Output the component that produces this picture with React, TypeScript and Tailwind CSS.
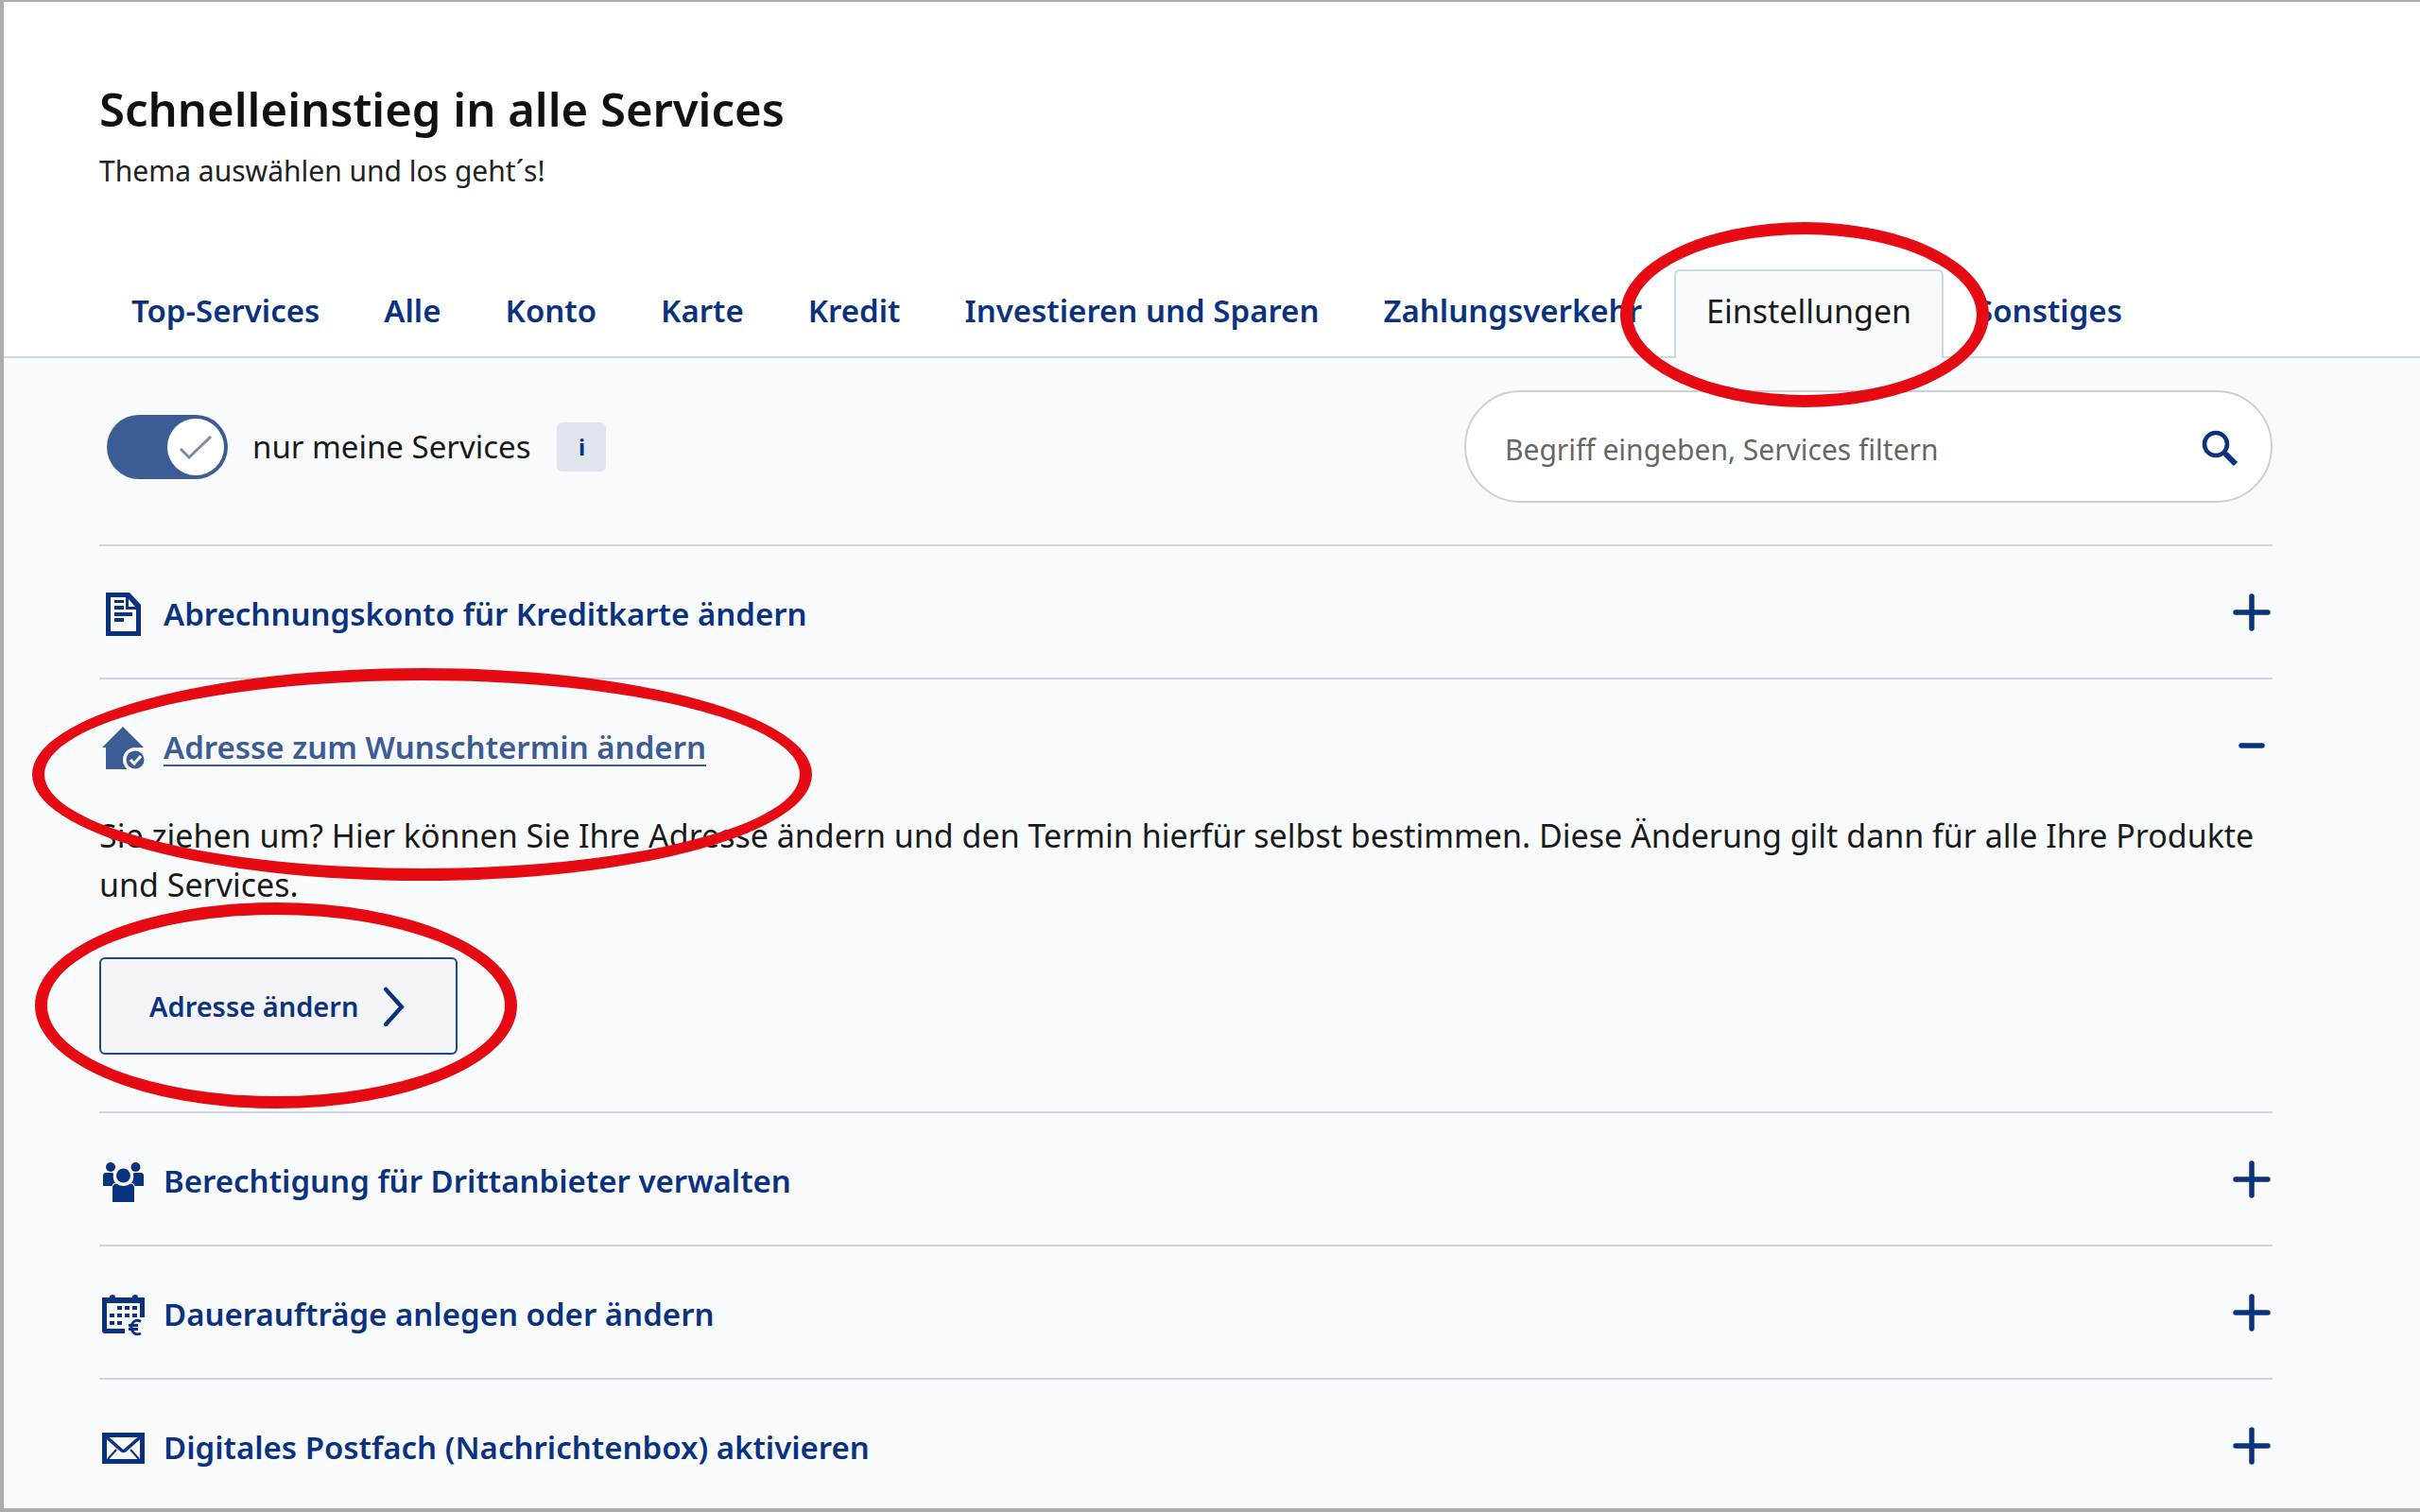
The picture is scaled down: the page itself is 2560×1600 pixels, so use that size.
import { useState } from "react";
import type { ReactNode } from "react";

const tabs = [
  "Top-Services",
  "Alle",
  "Konto",
  "Karte",
  "Kredit",
  "Investieren und Sparen",
  "Zahlungsverkehr",
  "Einstellungen",
  "Sonstiges",
];

const DocumentIcon = () => (
  <svg viewBox="0 0 48 48" className="size-12 shrink-0" fill="currentColor" aria-hidden="true">
    <path
      fillRule="evenodd"
      d="M7 1H32L44 14V47H7ZM12 6V42H39V19H28V6ZM31 8V16H38Z"
    />
    <path d="M16 9h10v3H16zM16 15h10v4H16zM16 22h19v4H16zM16 28h10v4H16z" />
  </svg>
);

const HouseIcon = () => (
  <svg viewBox="0 0 48 48" className="size-12 shrink-0" fill="currentColor" aria-hidden="true">
    <path d="M25 2L47 24H41V47H7V24H3Z" />
    <circle cx="38" cy="37" r="13" className="fill-[#f9fafc]" />
    <circle cx="38" cy="37" r="9.5" />
    <path d="M33 37l4 4 7-8" fill="none" className="stroke-white" strokeWidth="3" />
  </svg>
);

const PeopleIcon = () => (
  <svg viewBox="0 0 48 48" className="size-12 shrink-0" fill="currentColor" aria-hidden="true">
    <circle cx="12" cy="9" r="5" />
    <circle cx="38.5" cy="9" r="5" />
    <circle cx="25.5" cy="18" r="7.5" />
    <path d="M4 18q0-3 3-3h6q2 0 2 1-1 6 2 10-3 0-3.5 3H4zM47 18q0-3-3-3h-6q-2 0-2 1 1 6-2 10 3 0 3.5 3H47z" />
    <path d="M14 31q0-4 4-4.5 7.5 5 15 0 4 .5 4 4.5v15H14z" />
  </svg>
);

const CalendarIcon = () => (
  <svg viewBox="0 0 48 48" className="size-12 shrink-0" fill="currentColor" aria-hidden="true">
    <path d="M3 6h8a3 3 0 0 1 6 0h18a3 3 0 0 1 6 0h7v21h-5V12H8v27h19v5H6q-3 0-3-3z" />
    <path d="M19 15h5v4h-5zM27 15h5v4h-5zM35 15h5v4h-5zM11 23h5v4h-5zM19 23h5v4h-5zM27 23h5v4h-5zM35 23h5v4h-5zM11 31h5v4h-5zM19 31h5v4h-5z" />
    <path
      d="M44 31.5C38 28 34 33 34 37.5S38 47 44 44M31 35.5h10M31 39.5h10"
      fill="none"
      stroke="currentColor"
      strokeWidth="2.8"
    />
  </svg>
);

const MailIcon = () => (
  <svg viewBox="0 0 48 48" className="size-12 shrink-0" fill="none" stroke="currentColor" aria-hidden="true">
    <path d="M5.5 10.5h40v28h-40z" strokeWidth="5" />
    <path d="M8 13l16 14q1.5 1 3 0l16-14" strokeWidth="3.5" />
    <path d="M9 36l9-10M42 36l-9-10" strokeWidth="2" />
  </svg>
);

const PlusMinus = ({ open }: { open: boolean }) => (
  <svg viewBox="0 0 40 40" className="size-10" fill="none" stroke="currentColor" strokeWidth="5.5" strokeLinecap="round" aria-hidden="true">
    {open ? <path d="M9 20h22" /> : <path d="M3 20h34M20 3v34" />}
  </svg>
);

interface IService {
  title: string;
  icon: ReactNode;
  text?: string;
  action?: string;
}

const services: IService[] = [
  { title: "Abrechnungskonto für Kreditkarte ändern", icon: <DocumentIcon /> },
  {
    title: "Adresse zum Wunschtermin ändern",
    icon: <HouseIcon />,
    text: "Sie ziehen um? Hier können Sie Ihre Adresse ändern und den Termin hierfür selbst bestimmen. Diese Änderung gilt dann für alle Ihre Produkte und Services.",
    action: "Adresse ändern",
  },
  { title: "Berechtigung für Drittanbieter verwalten", icon: <PeopleIcon /> },
  { title: "Daueraufträge anlegen oder ändern", icon: <CalendarIcon /> },
  { title: "Digitales Postfach (Nachrichtenbox) aktivieren", icon: <MailIcon /> },
];

// red marker drawn over the content it surrounds
const Marker = ({ className }: { className: string }) => (
  <span
    aria-hidden="true"
    className={`pointer-events-none absolute z-10 rounded-[50%] border-[13px] border-[#e60b13] ${className}`}
  />
);

const ServiceRow = ({ service, open, onToggle }: { service: IService; open: boolean; onToggle: () => void }) => (
  <li className="group relative border-t-2 border-[#cfd5e0]">
    <button
      type="button"
      aria-expanded={open}
      onClick={onToggle}
      className="flex w-full items-center justify-between py-[45px] pr-[2px] text-left group-last:pb-10"
    >
      <span className={`flex h-[49px] items-center gap-5 pt-1 ${open ? "text-[#3b5c94]" : ""}`}>
        {service.icon}
        <span
          className={`text-[33px] leading-[49px] font-semibold ${
            open ? "underline decoration-2 underline-offset-[6px]" : ""
          }`}
        >
          {service.title}
        </span>
      </span>
      <PlusMinus open={open} />
    </button>
    {open && service.text && (
      <>
        <Marker className="-top-3 -left-[71px] h-[225px] w-[825px]" />
        <div className="pb-[60px]">
          <p className="text-[34px] leading-[52px] text-[#1a1a1a]">{service.text}</p>
          <div className="relative mt-[51px] inline-block align-top">
            <button
              type="button"
              className="flex items-center gap-6 rounded-md border-2 border-[#1f4a87] bg-[#f2f4f8] px-[51px] py-7 text-[29px] leading-[43px] font-semibold"
            >
              {service.action}
              <svg viewBox="0 0 28 44" className="h-[43px] w-7" fill="none" stroke="currentColor" strokeWidth="4.5" strokeLinecap="round" aria-hidden="true">
                <path d="M5 4l17 19L5 42" />
              </svg>
            </button>
            <Marker className="-top-[58px] -left-[68px] h-[218px] w-[510px]" />
          </div>
        </div>
      </>
    )}
  </li>
);

const App = () => {
  const [activeTab, setActiveTab] = useState("Einstellungen");
  const [onlyMine, setOnlyMine] = useState(true);
  const [filter, setFilter] = useState("");
  const [openRow, setOpenRow] = useState("Adresse zum Wunschtermin ändern");

  return (
    <div className="flex min-h-screen flex-col border-t-2 border-b-4 border-l-4 border-[#adadaf] bg-white font-['Noto_Sans','Open_Sans',sans-serif] text-[#0a327e]">
      <header className="pt-[81px] pl-[101px]">
        <h1 className="text-[49px] leading-16 font-semibold text-[#111111]">Schnelleinstieg in alle Services</h1>
        <p className="mt-3.5 text-[30px] leading-10 text-[#222222]">Thema auswählen und los geht´s!</p>
      </header>
      <nav role="tablist" className="mt-21 flex border-b-2 border-[#cfd7df] pl-[101px]">
        {tabs.map((tab) => (
          <button
            key={tab}
            type="button"
            role="tab"
            aria-selected={tab === activeTab}
            onClick={() => setActiveTab(tab)}
            className={`relative -mb-[2px] border-2 border-b-0 px-8 pt-5 pb-7 leading-11 ${
              tab === activeTab
                ? "rounded-t-md border-[#cfd7e2] bg-[#f9fafc] text-[34px] text-[#1a1a1a]"
                : "border-transparent text-[33px] font-semibold"
            }`}
          >
            {tab}
            {tab === "Einstellungen" && <Marker className="-top-[52px] -left-[59px] h-[196px] w-[390px]" />}
          </button>
        ))}
      </nav>
      <main className="grow bg-[#f9fafc] pt-[34px] pr-[156px] pl-[101px]">
        <div className="flex items-center justify-between pb-11">
          <div className="flex items-center gap-7 pl-2">
            <label className="flex items-center gap-[26px] text-[33px] leading-11 text-[#1a1a1a]">
              <span className="relative flex">
                <input
                  type="checkbox"
                  checked={onlyMine}
                  onChange={(event) => setOnlyMine(event.target.checked)}
                  className="peer h-[68px] w-32 appearance-none rounded-full bg-[#a3acbd] checked:bg-[#3b5c94]"
                />
                <span className="pointer-events-none absolute top-1 left-1 flex size-[60px] items-center justify-center rounded-full bg-white peer-checked:left-16">
                  <svg viewBox="0 0 36 26" className="h-[26px] w-9" fill="none" stroke="#8189a3" strokeWidth="3" aria-hidden="true">
                    <path d="M2 15l9 9L34 2" />
                  </svg>
                </span>
              </span>
              nur meine Services
            </label>
            <button
              type="button"
              aria-label="Information"
              className="size-[52px] rounded-md bg-[#e0e5ee] text-2xl font-bold"
            >
              i
            </button>
          </div>
          <div className="flex w-[855px] items-center rounded-full border-2 border-[#cccfd4] bg-white pr-[33px] pl-[41px]">
            <input
              type="text"
              aria-label="Services filtern"
              placeholder="Begriff eingeben, Services filtern"
              value={filter}
              onChange={(event) => setFilter(event.target.value)}
              className="h-[115px] grow bg-transparent pt-1.5 text-[30px] text-[#1a1a1a] outline-none placeholder:text-[#666666]"
            />
            <button type="button" aria-label="Suchen">
              <svg viewBox="0 0 40 40" className="size-10" fill="none" stroke="currentColor" aria-hidden="true">
                <circle cx="15" cy="17" r="12" strokeWidth="4.5" />
                <path d="M23 25l4 4" strokeWidth="4.5" />
                <path d="M25 27l11 11" strokeWidth="6" />
              </svg>
            </button>
          </div>
        </div>
        <ul>
          {services
            .filter((service) => service.title.toLowerCase().includes(filter.toLowerCase()))
            .map((service) => (
              <ServiceRow
                key={service.title}
                service={service}
                open={service.title === openRow}
                onToggle={() => setOpenRow(service.title === openRow ? "" : service.title)}
              />
            ))}
        </ul>
      </main>
    </div>
  );
};

export default App;
